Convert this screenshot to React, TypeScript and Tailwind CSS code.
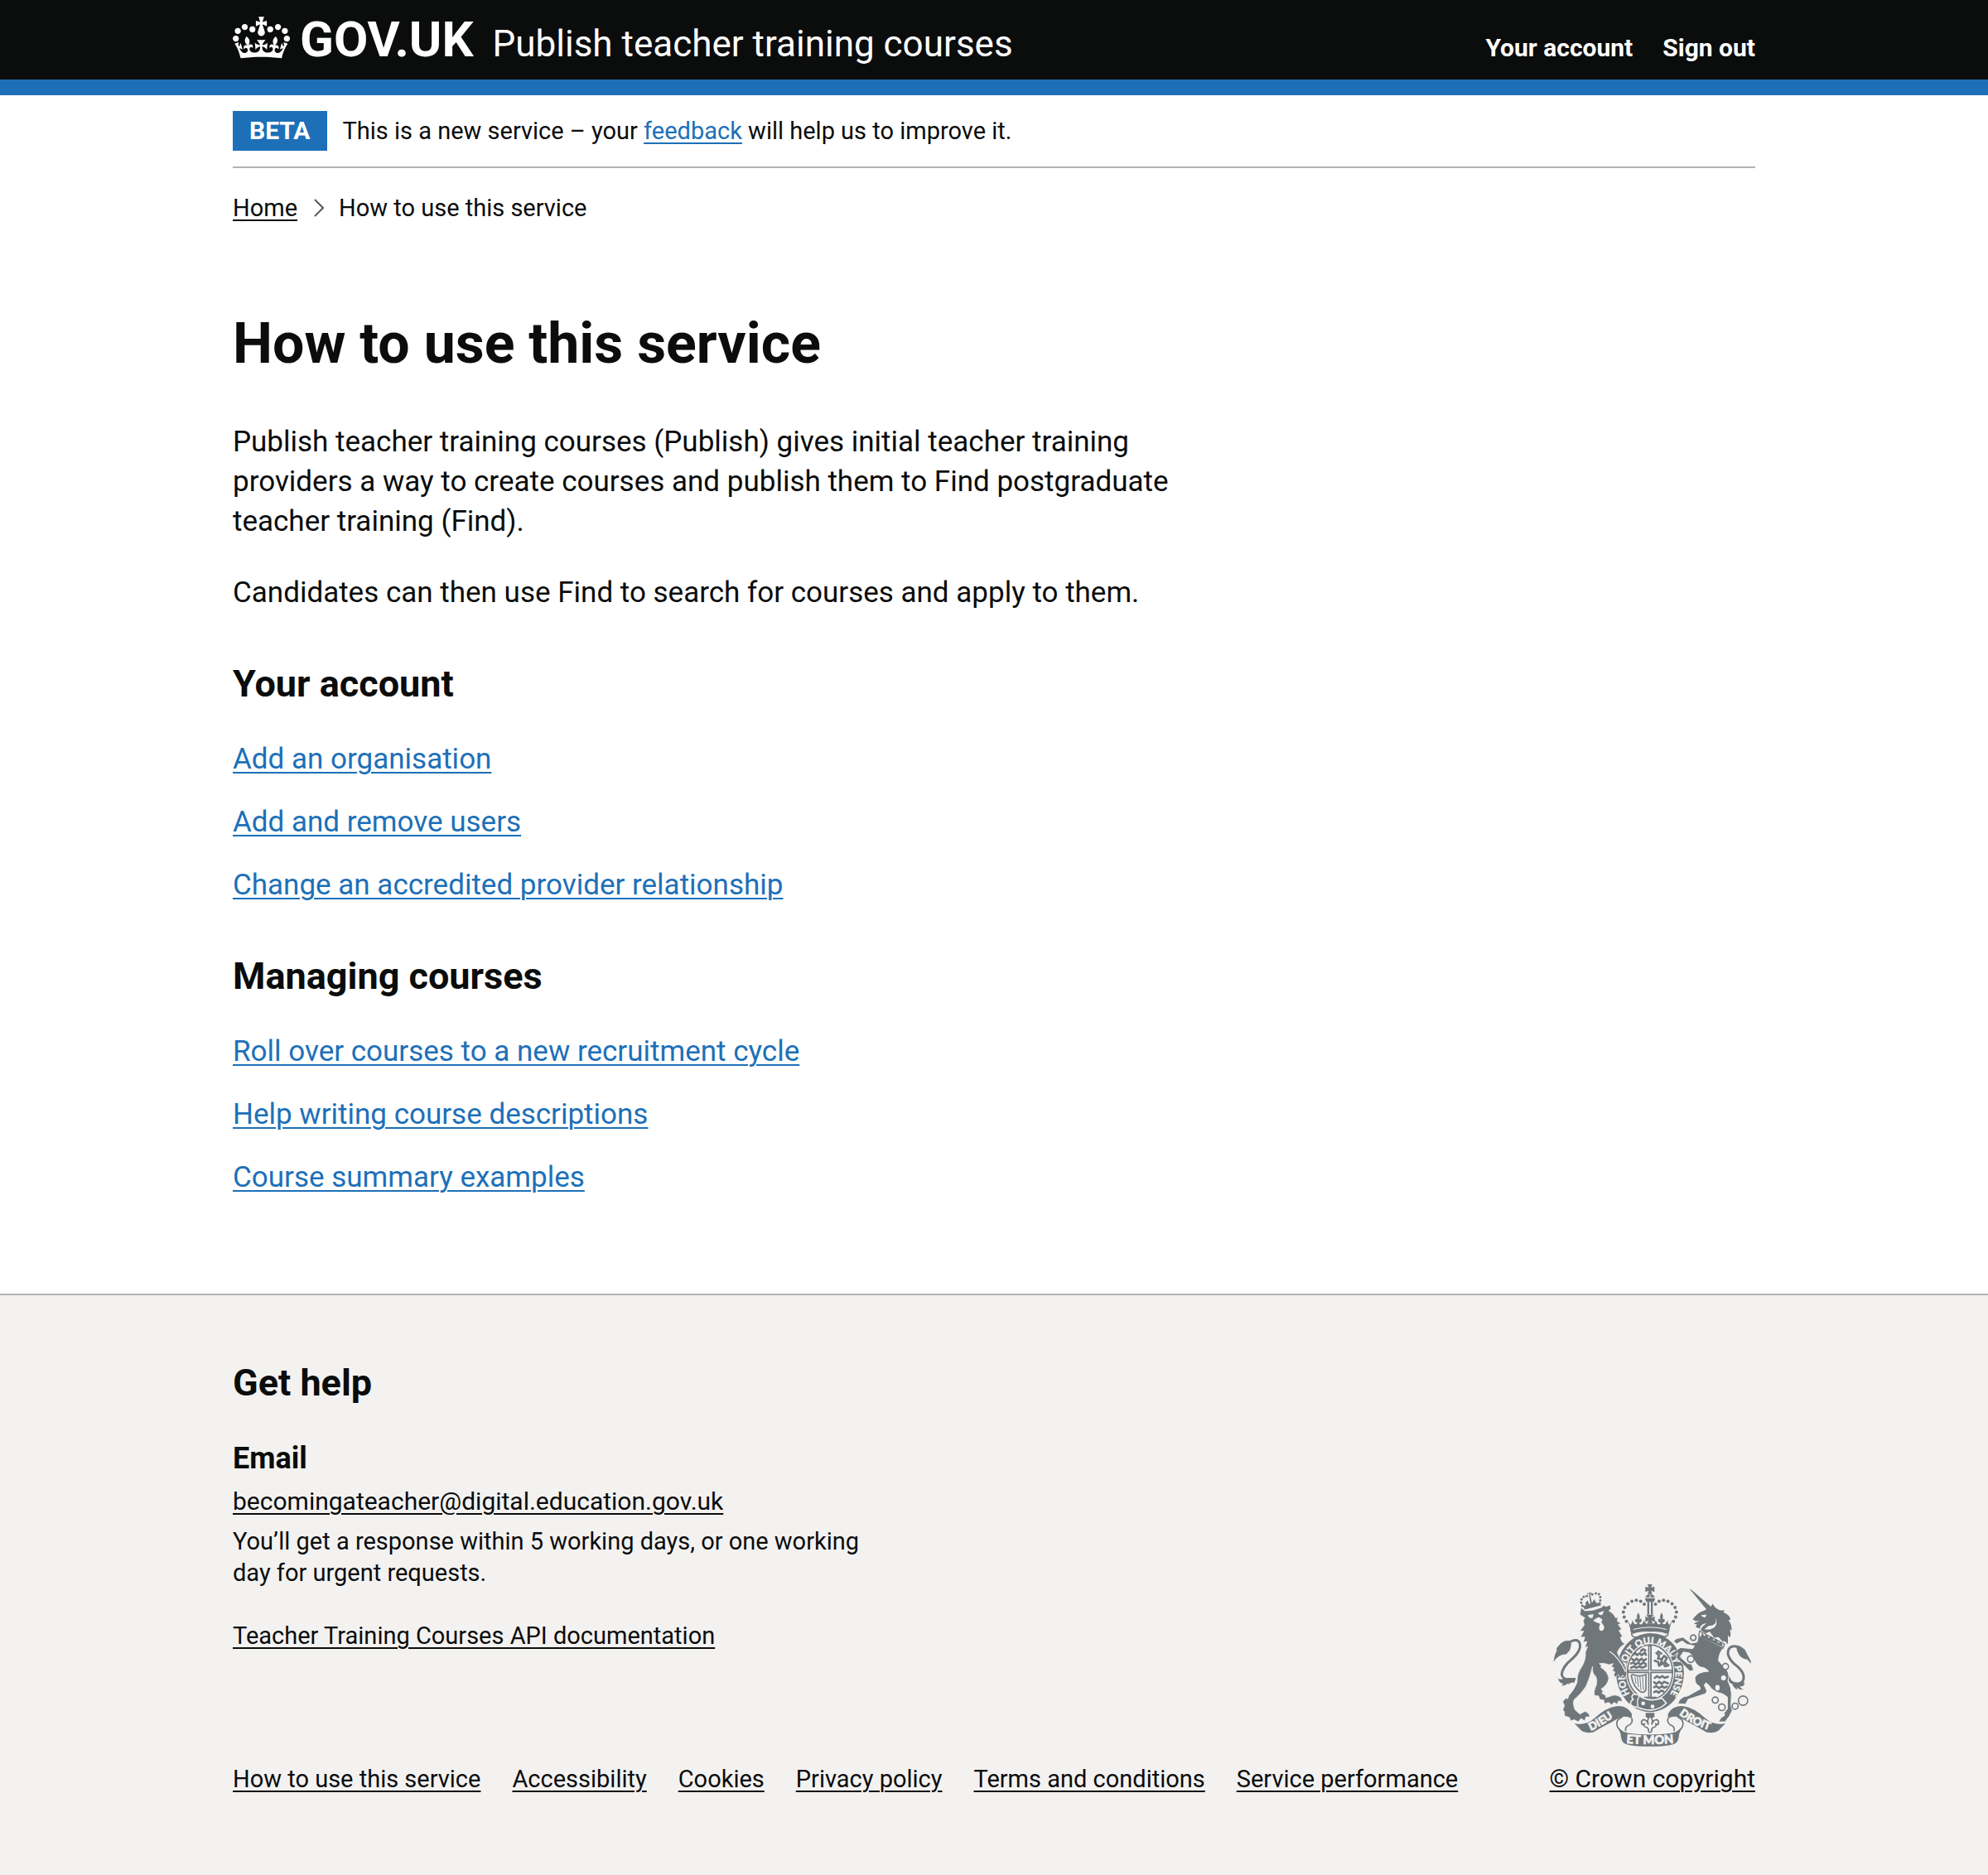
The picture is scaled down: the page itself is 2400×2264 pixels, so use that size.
import type { ReactNode } from "react";

const accountLinks = [
  "Add an organisation",
  "Add and remove users",
  "Change an accredited provider relationship",
];

const courseLinks = [
  "Roll over courses to a new recruitment cycle",
  "Help writing course descriptions",
  "Course summary examples",
];

const footerLinks = [
  "How to use this service",
  "Accessibility",
  "Cookies",
  "Privacy policy",
  "Terms and conditions",
  "Service performance",
];

function Container({ children, className = "" }: { children: ReactNode; className?: string }) {
  return <div className={`mx-auto w-full max-w-[1898px] px-[30px] ${className}`}>{children}</div>;
}

function Link({ children, className = "" }: { children: ReactNode; className?: string }) {
  return (
    <a href="#" className={`underline decoration-2 underline-offset-4 ${className}`}>
      {children}
    </a>
  );
}

function Crown() {
  return (
    <svg viewBox="0 0 132 97" className="mt-[2px] h-[51px] w-[69px] self-start" fill="currentColor" aria-hidden="true">
      <path
        fillRule="evenodd"
        d="M25 30.2c3.5 1.5 7.7-.2 9.1-3.7 1.5-3.6-.2-7.8-3.9-9.2-3.6-1.4-7.6.3-9.1 3.9-1.4 3.5.3 7.5 3.9 9zM9 39.5c3.6 1.5 7.8-.2 9.2-3.7 1.5-3.6-.2-7.8-3.9-9.1-3.6-1.5-7.6.2-9.1 3.8-1.4 3.5.3 7.5 3.8 9zM4.4 57.2c3.5 1.5 7.7-.2 9.1-3.8 1.5-3.6-.2-7.7-3.9-9.1-3.5-1.5-7.6.3-9.1 3.8-1.4 3.5.3 7.6 3.9 9.1zm38.3-21.4c3.5 1.5 7.7-.2 9.1-3.8 1.5-3.6-.2-7.7-3.9-9.1-3.6-1.5-7.6.3-9.1 3.8-1.3 3.6.4 7.7 3.9 9.1zm64.4-5.6c-3.6 1.5-7.8-.2-9.1-3.7-1.5-3.6.2-7.8 3.8-9.2 3.6-1.4 7.7.3 9.2 3.9 1.3 3.5-.4 7.5-3.9 9zm15.9 9.3c-3.6 1.5-7.7-.2-9.1-3.7-1.5-3.6.2-7.8 3.7-9.1 3.6-1.5 7.7.2 9.2 3.8 1.5 3.5-.3 7.5-3.8 9zm4.7 17.7c-3.6 1.5-7.8-.2-9.2-3.8-1.5-3.6.2-7.7 3.9-9.1 3.6-1.5 7.7.3 9.2 3.8 1.3 3.5-.4 7.6-3.9 9.1zM89.3 35.8c-3.6 1.5-7.8-.2-9.2-3.8-1.4-3.6.2-7.7 3.9-9.1 3.6-1.5 7.7.3 9.2 3.8 1.4 3.6-.3 7.7-3.9 9.1zM69.7 17.7l8.9 4.7V9.3l-8.9 2.8c-.2-.3-.5-.6-.9-.9L72.4 0H59.6l3.5 11.2c-.3.3-.6.5-.9.9l-8.8-2.8v13.1l8.8-4.7c.3.3.6.7.9.9l-5 15.4v.1c-.2.8-.4 1.6-.4 2.4 0 4.1 3.1 7.5 7 8.1h.2c.3 0 .7.1 1 .1.4 0 .7 0 1-.1h.2c4-.6 7.1-4.1 7.1-8.1 0-.8-.1-1.7-.4-2.4V34l-5.1-15.4c.4-.2.7-.6 1-.9zM66 92.8c16.9 0 32.8 1.1 47.1 3.2 4-16.9 8.9-26.7 14-33.5l-9.6-3.4c1 4.9 1.1 7.2 0 10.2-1.5-1.4-3-4.3-4.2-8.7L108.6 76c2.8-2 5-3.2 7.5-3.3-4.4 9.4-10 11.9-13.6 11.2-4.3-.8-6.3-4.6-5.6-7.9 1-4.7 5.7-5.9 8-.5 4.3-8.7-3-11.4-7.6-8.8 7.1-7.2 7.9-13.5 2.1-21.1-8 6.1-8.1 12.3-4.5 20.8-4.7-5.4-12.1-2.5-9.5 6.2 3.4-5.2 7.9-2 7.2 3.1-.6 4.3-6.4 7.8-13.5 7.2-10.3-.9-10.9-8-11.2-13.8 2.5-.5 7.1 1.8 11 7.3L80.2 60c-4.1 4.4-8 5.3-12.3 5.4 1.4-4.4 8-11.6 8-11.6H55.5s6.4 7.2 7.9 11.6c-4.2-.1-8-1-12.3-5.4l1.4 16.4c3.9-5.5 8.5-7.7 10.9-7.3-.3 5.8-.9 12.8-11.1 13.8-7.2.6-12.9-2.9-13.5-7.2-.7-5 3.8-8.3 7.1-3.1 2.7-8.7-4.6-11.6-9.4-6.2 3.7-8.5 3.6-14.7-4.6-20.8-5.8 7.6-5 13.9 2.2 21.1-4.7-2.6-11.9.1-7.7 8.8 2.3-5.5 7.1-4.2 8.1.5.7 3.3-1.3 7.1-5.7 7.9-3.5.7-9-1.8-13.5-11.2 2.5.1 4.7 1.3 7.5 3.3l-4.7-15.4c-1.2 4.4-2.7 7.2-4.3 8.7-1.1-3-.9-5.3 0-10.2l-9.5 3.4c5 6.9 9.9 16.7 14 33.5 14.8-2.1 30.8-3.2 47.7-3.2z"
      />
    </svg>
  );
}

const archDots = [
  [337, 209], [329, 193], [326, 175], [331, 158], [342, 145], [357, 136], [373, 132], [389, 136], [402, 146],
];

const lionCrownDots = [
  [177, 152], [173, 141], [174, 129], [182, 120], [193, 117], [213, 111], [226, 107], [237, 110], [242, 121], [242, 133], [240, 143],
];

const chainRings = [
  [580, 268, 10], [571, 346, 12], [697, 373, 11], [660, 495, 11], [684, 521, 12], [732, 517, 11], [761, 497, 17],
];

function CrownHalf() {
  return (
    <>
      {archDots.map(([x, y]) => (
        <circle key={`${x}-${y}`} cx={x} cy={y} r="6" />
      ))}
      <path d="M337 200 L352 222 Q360 212 358 204 L366 218 Q374 222 378 214 Q366 212 369 202 Q373 196 377 203 Q372 188 380 177 Q389 188 384 203 Q388 196 392 202 Q395 212 383 214 Q388 224 395 217 L402 204 Q404 216 412 218 L423 218 L423 246 Q385 244 362 254 L352 246 Q350 220 337 200 Z" />
    </>
  );
}

function RibbonHalf() {
  return (
    <>
      <path d="M148 580 Q190 588 222 560 Q262 522 300 517 Q340 514 357 545 L356 562 Q340 552 322 556 Q300 564 286 574 Q250 592 216 612 Q178 618 166 598 Z" />
      <path
        d="M356 560 Q362 574 350 584 Q330 590 335 608 M322 556 Q298 566 303 586 Q304 598 320 608"
        fill="none"
        stroke="currentColor"
        strokeWidth="5"
      />
      <path d="M303 585 Q312 610 345 615 Q380 620 423 620 L423 663 Q340 664 325 648 Q318 640 316 618 Z" />
    </>
  );
}

function CoatOfArms() {
  return (
    <svg viewBox="72 74 720 590" className="h-[196px] w-[240px] text-[#70777b]" fill="currentColor" aria-hidden="true">
      <defs>
        <path id="garter" d="M350 472 A92 113 0 1 1 496 472" />
        <path id="ribbonLeft" d="M208 606 Q250 588 310 543" />
        <path id="ribbonRight" d="M528 547 Q580 588 650 607" />
        <path id="ribbonMid" d="M332 651 Q422 659 514 651" />
      </defs>

      {/* garter and shield */}
      <ellipse cx="423" cy="395" rx="123" ry="143" />
      <ellipse cx="423" cy="393" rx="88" ry="106" fill="#f3f2f1" />
      <ellipse cx="423" cy="393" rx="82" ry="99" fill="none" stroke="currentColor" strokeWidth="5" />
      <path d="M416 296 H429 V492 H416 Z M342 384 H504 V397 H342 Z" />
      <path d="M422 300 V488 M346 390 H500" stroke="#f3f2f1" strokeWidth="3" />
      <g fill="none" stroke="currentColor" strokeWidth="8" strokeLinecap="round" strokeLinejoin="round">
        <path d="M362 330 l8 -6 6 8 10 -8 6 8 12 -10 4 8 M358 346 l8 6 8 -8 10 8 8 -8 8 8 8 -6 M354 362 l8 -4 8 8 10 -8 8 8 10 -8 10 6 M354 377 l10 -4 10 4 10 -4 10 4 14 -6 M390 316 l8 -6 8 4" />
        <path d="M440 414 l8 -6 10 6 10 -6 8 6 12 -4 M438 430 l8 6 10 -8 10 8 8 -8 14 6 M438 448 l8 -4 10 8 10 -8 8 6 10 -4 M438 466 l8 -4 8 6 10 -8 8 4" />
        <path d="M446 324 l10 8 -4 12 14 2 8 -12 10 8 -8 14 10 10 M440 352 l12 4 4 14 14 -10 8 12 12 -4 M452 318 l12 8 M462 362 l4 -14" />
      </g>
      <g fill="none" stroke="currentColor" strokeWidth="5">
        <path d="M356 410 Q352 402 362 402 Q380 412 408 402 L408 456 Q404 468 392 466 Q362 450 356 410 Z" />
        <path d="M368 410 L372 436 M377 410 L381 448 M386 410 L390 458 M396 408 L399 458" strokeWidth="3" />
        <path d="M400 487 H446" strokeWidth="9" />
      </g>

      <text fill="#f3f2f1" stroke="#f3f2f1" strokeWidth="1" fontFamily="Lato, sans-serif" fontSize="34" fontWeight="900">
        <textPath href="#garter">HONI SOIT QUI MAL Y PENSE</textPath>
      </text>

      {/* belt and buckle */}
      <path d="M362 474 Q378 472 392 484 Q425 502 466 488 L482 506 Q440 548 376 520 Q356 520 352 508 Q352 498 362 492 Q352 484 362 474 Z" stroke="#f3f2f1" strokeWidth="5" />
      <path d="M384 480 Q372 500 380 518" fill="none" stroke="#f3f2f1" strokeWidth="4" />
      <circle cx="398" cy="507" r="7" fill="#f3f2f1" />
      <circle cx="432" cy="518" r="7" fill="#f3f2f1" />

      {/* royal crown */}
      <path
        d="M366 240 Q423 232 479 240 Q492 244 488 256 Q484 266 470 263 Q423 244 375 266 Q358 268 356 254 Q356 244 366 240 Z"
        fill="#f3f2f1"
        stroke="currentColor"
        strokeWidth="5"
      />
      <CrownHalf />
      <g transform="translate(845 0) scale(-1 1)">
        <CrownHalf />
      </g>
      <path d="M362 238 Q423 222 483 238" fill="none" stroke="#f3f2f1" strokeWidth="3" />
      <path d="M409 184 H437 L428 197 L440 190 V212 L428 205 L434 218 H412 L418 205 L406 212 V190 L418 197 Z" />
      <path d="M414 74 H431 L427 86 L439 82 V102 L427 97 L431 109 H414 L418 97 L406 102 V82 L418 86 Z" />
      <path d="M405 128 Q406 110 423 110 Q440 110 441 128 L437 138 H409 Z" />
      <path d="M404 123 H442 M423 112 V123" stroke="#f3f2f1" strokeWidth="3" />
      <path d="M413 138 H420 V182 H413 Z M426 138 H433 V182 H426 Z" />

      {/* lion */}
      <path
        d="M120 290 Q160 264 168 290 Q174 314 140 345 Q104 374 102 402 Q108 428 152 418"
        fill="none"
        stroke="currentColor"
        strokeWidth="9"
      />
      <path d="M72 356 Q76 328 84 316 Q80 306 92 296 Q108 274 136 280 Q140 312 118 328 Q90 328 72 356 Z" />
      <path d="M88 416 Q100 424 110 414 L152 414 L148 432 Q136 428 126 440 L128 432 Q112 444 102 442 L108 434 Q94 436 88 416 Z" />
      <path
        d="M168 184 L172 158 L186 170 Q215 172 246 158 L256 150 L262 155 L278 149 L281 163 L273 170 Q292 180 298 196 L306 194 L304 208 L318 216 L307 220 L320 238 L310 242 L322 262 L315 268 L322 284 L332 290 Q310 302 304 322 L312 340 Q336 366 338 398 L334 416 L324 404 L316 416 L308 402 L296 412 L291 402 L296 393 L286 388 L292 378 L282 372 L290 362 L274 366 Q255 358 238 362 L246 370 L244 376 Q268 390 273 415 Q270 440 245 455 L252 462 L248 470 L262 478 L262 486 L276 482 Q298 470 318 486 L322 500 L308 498 L304 510 L292 503 L284 512 L272 503 L258 508 L255 495 L240 492 L236 480 L222 478 Q216 465 228 440 Q232 425 226 408 Q212 400 214 372 Q204 415 190 445 Q170 475 148 492 Q140 505 150 530 L168 546 L186 536 Q202 540 204 556 L190 556 L186 570 L172 562 L162 574 L148 566 L135 570 L130 558 L112 552 L112 538 L106 530 L112 515 L106 500 L116 488 L124 490 L128 478 Q148 458 158 430 Q156 405 168 385 Q192 350 188 322 L196 300 L186 304 L194 282 L180 284 L186 266 L170 266 L182 244 L168 244 L184 222 L180 206 L186 196 Z"
        stroke="#f3f2f1"
        strokeWidth="2"
      />
      <path d="M276 318 Q310 340 334 392" fill="none" stroke="#f3f2f1" strokeWidth="4" />
      <g fill="#f3f2f1">
        <path d="M196 186 L218 182 L214 196 Q204 200 196 186 Z M234 178 L256 170 L250 184 Q240 190 234 178 Z" />
        <path d="M216 206 L230 196 L238 194 L250 202 L246 212 L256 226 Q258 242 246 243 Q236 242 238 228 L242 218 L226 212 Z" />
      </g>
      {lionCrownDots.map(([x, y]) => (
        <circle key={`${x}-${y}`} cx={x} cy={y} r="4.5" />
      ))}
      <path d="M178 154 L190 150 L188 142 L196 132 L202 146 L206 144 L200 104 L196 112 L194 106 L210 103 L208 110 L204 106 L212 142 L220 128 L228 142 L238 142 L246 150 Q216 158 186 166 Z" />

      {/* unicorn */}
      <path
        d="M752 304 Q706 288 706 326 Q710 350 742 374 Q772 402 760 426 Q744 444 716 428 L700 396"
        fill="none"
        stroke="currentColor"
        strokeWidth="9"
      />
      <path d="M736 300 Q752 296 768 312 Q776 330 790 354 L788 362 Q778 344 766 346 Q740 336 736 300 Z" />
      <path d="M716 420 Q730 440 766 430 Q768 446 748 446 L762 458 Q744 456 738 448 L740 458 Q722 448 716 420 Z" />
      <path
        d="M600 258 L692 302 Q672 325 672 352 Q684 366 702 385 Q714 404 706 425 Q719 450 719 472 L717 516 L722 532 L712 552 L696 574 L672 574 L680 560 L694 550 L692 542 L704 526 L704 484 Q690 470 672 468 Q650 462 636 440 L626 432 L620 440 L630 462 L624 472 L562 492 L552 510 L524 508 L530 494 L546 482 L560 480 L606 454 L602 444 Q584 436 586 412 Q596 392 636 390 Q626 376 604 374 Q584 362 580 336 L566 324 L544 320 L532 338 L560 362 L574 364 L582 386 L568 390 L550 372 L518 340 L524 322 L508 336 L496 326 L534 304 L578 308 L584 298 L556 292 L540 280 L520 290 L508 282 L518 272 L542 266 L572 288 L594 284 Z"
        stroke="#f3f2f1"
        strokeWidth="3"
      />
      <path d="M566 90 L574 94 L648 158 L632 170 Z" />
      <path
        d="M578 202 Q592 180 614 172 L634 162 L644 156 L650 145 L660 158 Q676 172 694 168 L690 176 Q712 184 716 202 L708 204 Q722 222 719 242 L712 238 Q720 256 712 268 L706 258 L706 292 Q690 274 688 284 L672 266 L656 268 L640 246 L624 252 L606 240 Q614 224 628 216 Q612 216 606 228 L604 236 L588 228 L594 220 L582 216 L604 206 L590 208 Z"
      />
      <path d="M608 186 L628 184 L624 194 Q614 196 608 186 Z M660 190 Q672 224 634 226 L620 238 L640 238 Q676 230 660 190 Z" fill="#f3f2f1" />
      <path d="M603 244 L694 292 L688 306 L600 264 Z" fill="#f3f2f1" stroke="currentColor" strokeWidth="4" />
      <path d="M608 262 L612 250 L620 262 L630 256 L636 270 L648 263 L654 279 L666 272 L670 288 L682 283 L688 302 L606 266 Z" />
      <g fill="none" stroke="currentColor" strokeWidth="5">
        {chainRings.map(([x, y, r]) => (
          <circle key={`${x}-${y}`} cx={x} cy={y} r={r} />
        ))}
      </g>
      <circle cx="697" cy="373" r="8" fill="#f3f2f1" />
      <circle cx="690" cy="414" r="9" fill="#f3f2f1" />
      <ellipse cx="668" cy="450" rx="8" ry="10" fill="#f3f2f1" />

      {/* pendant */}
      <path d="M407 541 H439 V556 L432 560 H414 L407 556 Z" />
      <path
        d="M423 552 Q410 566 417 584 Q412 566 398 566 Q388 572 394 584 L402 582 Q398 592 412 594 L418 602 Q414 610 423 612 Q432 610 428 602 L434 594 Q448 592 444 582 L452 584 Q458 572 448 566 Q434 566 429 584 Q436 566 423 552 Z"
        fill="#f3f2f1"
        stroke="currentColor"
        strokeWidth="5"
      />

      {/* motto ribbon */}
      <RibbonHalf />
      <g transform="translate(845 0) scale(-1 1)">
        <RibbonHalf />
      </g>
      <g fill="#f3f2f1" stroke="#f3f2f1" strokeWidth="2" fontFamily="Lato, sans-serif" fontWeight="900">
        <text fontSize="40">
          <textPath href="#ribbonLeft">DIEU</textPath>
        </text>
        <text fontSize="40">
          <textPath href="#ribbonRight">DROIT</textPath>
        </text>
        <text fontSize="44" textAnchor="middle">
          <textPath href="#ribbonMid" startOffset="50%">
            ET MON
          </textPath>
        </text>
      </g>
    </svg>
  );
}

function GuidanceSection({ title, links }: { title: string; links: string[] }) {
  return (
    <section className="mt-[57px]">
      <h2 className="text-[45px] leading-[58px] font-bold">{title}</h2>
      <ul className="mt-[38px] flex flex-col gap-[28px]">
        {links.map((label) => (
          <li key={label}>
            <Link className="text-[#1d70b8]">{label}</Link>
          </li>
        ))}
      </ul>
    </section>
  );
}

export default function App() {
  return (
    <div className="flex min-h-screen flex-col bg-white font-[Roboto,sans-serif] text-[29px] leading-[38px] text-[#0b0c0c]">
      <header className="border-b-[19px] border-[#1d70b8] bg-[#0b0c0c] text-white">
        <Container className="flex flex-wrap items-baseline pt-[18px] pb-[13px]">
          <a href="#" className="flex items-baseline" aria-label="GOV.UK">
            <Crown />
            <span className="ml-[12px] text-[60px] leading-[60px] font-bold">GOV.UK</span>
          </a>
          <a href="#" className="ml-[23px] text-[44px] leading-[60px]">
            Publish teacher training courses
          </a>
          <nav aria-label="Account" className="ml-auto flex gap-[36px] text-[30px] font-bold">
            <a href="#">Your account</a>
            <a href="#">Sign out</a>
          </nav>
        </Container>
      </header>

      <Container>
        <div className="flex items-center gap-[19px] border-b-2 border-[#b1b4b6] py-[19px] leading-[48px]">
          <strong className="bg-[#1d70b8] px-[20px] text-[30px] font-bold text-white">BETA</strong>
          <p>
            This is a new service – your <Link className="text-[#1d70b8]">feedback</Link> will help us to improve it.
          </p>
        </div>
        <nav aria-label="Breadcrumb" className="mt-[29px]">
          <ol className="flex items-center">
            <li>
              <Link>Home</Link>
            </li>
            <li className="flex items-center">
              <svg viewBox="0 0 12 22" className="mr-[18px] ml-[20px] h-[22px] w-[12px]" fill="none" stroke="#505a5f" strokeWidth="2" aria-hidden="true">
                <path d="M1 1 L11 11 L1 21" />
              </svg>
              How to use this service
            </li>
          </ol>
        </nav>
      </Container>

      <Container className="mt-[109px] mb-[116px]">
        <main className="max-w-[1200px] text-[35px] leading-[48px]">
          <h1 className="mb-[59px] text-[68px] leading-[72px] font-bold">How to use this service</h1>
          <p className="mb-[38px]">
            Publish teacher training courses (Publish) gives initial teacher training providers a way to create courses
            and publish them to Find postgraduate teacher training (Find).
          </p>
          <p>Candidates can then use Find to search for courses and apply to them.</p>
          <GuidanceSection title="Your account" links={accountLinks} />
          <GuidanceSection title="Managing courses" links={courseLinks} />
        </main>
      </Container>

      <footer className="flex-1 border-t-2 border-[#b1b4b6] bg-[#f3f2f1]">
        <Container className="flex flex-wrap items-end justify-between pt-[77px] pb-[92px]">
          <div>
            <h2 className="text-[45px] leading-[58px] font-bold">Get help</h2>
            <h3 className="mt-[38px] text-[36px] leading-[48px] font-bold">Email</h3>
            <p className="mt-[9px] text-[30px]">
              <Link>becomingateacher@digital.education.gov.uk</Link>
            </p>
            <p className="mt-[10px] max-w-[800px]">
              You’ll get a response within 5 working days, or one working day for urgent requests.
            </p>
            <p className="mt-[38px]">
              <Link>Teacher Training Courses API documentation</Link>
            </p>
            <ul className="mt-[135px] flex flex-wrap gap-x-[38px]">
              {footerLinks.map((label) => (
                <li key={label}>
                  <Link>{label}</Link>
                </li>
              ))}
            </ul>
          </div>
          <a href="#" className="flex flex-col items-center gap-[20px] text-[30px] underline decoration-2 underline-offset-4">
            <CoatOfArms />
            <span>© Crown copyright</span>
          </a>
        </Container>
      </footer>
    </div>
  );
}
